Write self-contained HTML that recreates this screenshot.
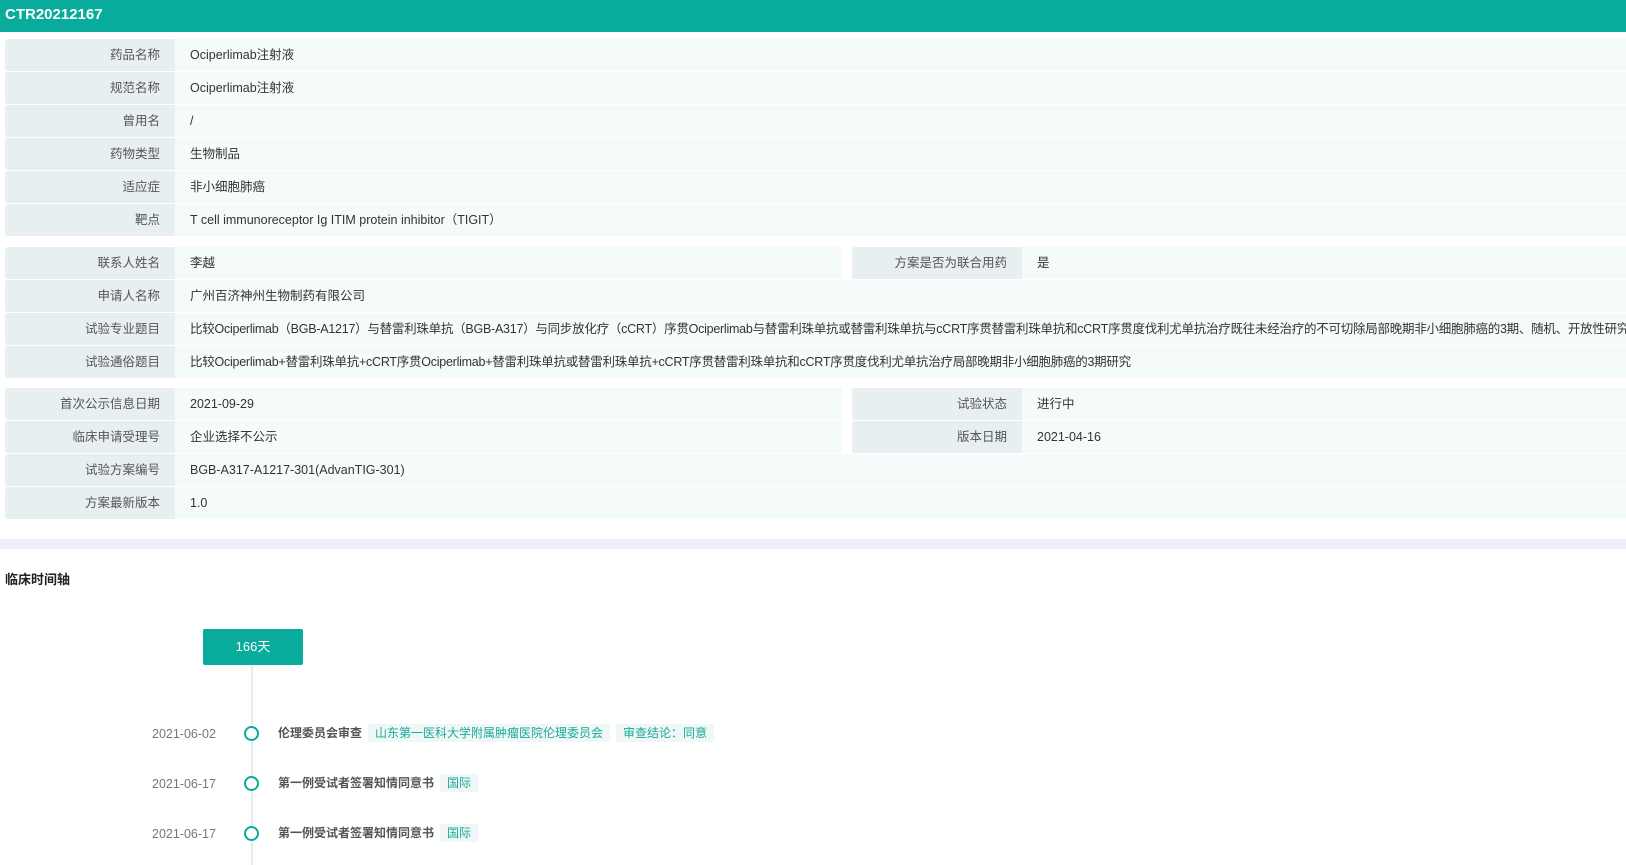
<!DOCTYPE html>
<html><head><meta charset="utf-8"><style>
*{margin:0;padding:0;box-sizing:border-box}
body{width:1626px;height:860px;overflow:hidden;background:#fff;font-family:"Liberation Sans","Noto Sans CJK SC",sans-serif;font-size:12.5px;color:#333}
.hd{height:32px;background:#08ab9c;color:#fff;font-weight:bold;font-size:15px;line-height:29px;padding-left:5px}
.blk{position:absolute;left:5px;right:0}
.row{position:absolute;left:0;right:0;height:32px;display:flex}
.lb{width:170px;background:#e7eff0;border-radius:3px 0 0 3px;text-align:right;padding-right:15px;line-height:32px;color:#555}
.vl{flex:1;background:#f5fbfb;line-height:32px;padding-left:15px;white-space:nowrap;overflow:hidden}
.gap{width:10px;background:#fff;flex:none}
.bar{position:absolute;left:0;right:0;top:539px;height:10px;background:#edf1f7}
.tt{position:absolute;left:5px;top:569px;font-weight:bold;font-size:13px;color:#222}
.days{position:absolute;left:203px;top:629px;width:100px;height:36px;background:#08ab9c;border-radius:2px;color:#fff;text-align:center;line-height:36px;font-size:13px}
.line{position:absolute;left:251px;top:665px;width:2px;height:200px;background:#e6ebf3}
.it{position:absolute;left:0;height:20px;line-height:20px}
.dt{position:absolute;left:152px;color:#777;width:80px}
.cir{position:absolute;left:244px;top:3px;width:15px;height:15px;border:2.5px solid #08ab9c;border-radius:50%;background:#fff}
.tx{position:absolute;left:278px;white-space:nowrap;font-weight:bold;color:#555;font-size:12px}
.tg{display:inline-block;background:#f0f7f7;color:#1aa89a;font-weight:normal;padding:0 7px;margin-left:6px;line-height:18px}
</style></head><body>
<div class="hd">CTR20212167</div>
<div class="blk" style="top:39px">
<div class="row" style="top:0"><div class="lb">药品名称</div><div class="vl">Ociperlimab注射液</div></div>
<div class="row" style="top:33px"><div class="lb">规范名称</div><div class="vl">Ociperlimab注射液</div></div>
<div class="row" style="top:66px"><div class="lb">曾用名</div><div class="vl">/</div></div>
<div class="row" style="top:99px"><div class="lb">药物类型</div><div class="vl">生物制品</div></div>
<div class="row" style="top:132px"><div class="lb">适应症</div><div class="vl">非小细胞肺癌</div></div>
<div class="row" style="top:165px"><div class="lb">靶点</div><div class="vl">T cell immunoreceptor Ig ITIM protein inhibitor（TIGIT）</div></div>
</div>
<div class="blk" style="top:247px">
<div class="row" style="top:0"><div class="lb">联系人姓名</div><div class="vl" style="flex:none;width:667px">李越</div><div class="gap"></div><div class="lb">方案是否为联合用药</div><div class="vl">是</div></div>
<div class="row" style="top:33px"><div class="lb">申请人名称</div><div class="vl">广州百济神州生物制药有限公司</div></div>
<div class="row" style="top:66px"><div class="lb">试验专业题目</div><div class="vl" style="letter-spacing:-0.25px">比较Ociperlimab（BGB-A1217）与替雷利珠单抗（BGB-A317）与同步放化疗（cCRT）序贯Ociperlimab与替雷利珠单抗或替雷利珠单抗与cCRT序贯替雷利珠单抗和cCRT序贯度伐利尤单抗治疗既往未经治疗的不可切除局部晚期非小细胞肺癌的3期、随机、开放性研究</div></div>
<div class="row" style="top:99px"><div class="lb">试验通俗题目</div><div class="vl" style="letter-spacing:-0.25px">比较Ociperlimab+替雷利珠单抗+cCRT序贯Ociperlimab+替雷利珠单抗或替雷利珠单抗+cCRT序贯替雷利珠单抗和cCRT序贯度伐利尤单抗治疗局部晚期非小细胞肺癌的3期研究</div></div>
</div>
<div class="blk" style="top:388px">
<div class="row" style="top:0"><div class="lb">首次公示信息日期</div><div class="vl" style="flex:none;width:667px">2021-09-29</div><div class="gap"></div><div class="lb">试验状态</div><div class="vl">进行中</div></div>
<div class="row" style="top:33px"><div class="lb">临床申请受理号</div><div class="vl" style="flex:none;width:667px">企业选择不公示</div><div class="gap"></div><div class="lb">版本日期</div><div class="vl">2021-04-16</div></div>
<div class="row" style="top:66px"><div class="lb">试验方案编号</div><div class="vl">BGB-A317-A1217-301(AdvanTIG-301)</div></div>
<div class="row" style="top:99px"><div class="lb">方案最新版本</div><div class="vl">1.0</div></div>
</div>
<div class="bar"></div>
<div class="tt">临床时间轴</div>
<div class="line"></div>
<div class="days">166天</div>
<div class="it" style="top:723px;width:1000px"><span class="dt" style="top:1px">2021-06-02</span><span class="cir"></span><span class="tx">伦理委员会审查<span class="tg">山东第一医科大学附属肿瘤医院伦理委员会</span><span class="tg">审查结论：同意</span></span></div>
<div class="it" style="top:773px;width:1000px"><span class="dt" style="top:1px">2021-06-17</span><span class="cir"></span><span class="tx">第一例受试者签署知情同意书<span class="tg">国际</span></span></div>
<div class="it" style="top:823px;width:1000px"><span class="dt" style="top:1px">2021-06-17</span><span class="cir"></span><span class="tx">第一例受试者签署知情同意书<span class="tg">国际</span></span></div>
</body></html>
